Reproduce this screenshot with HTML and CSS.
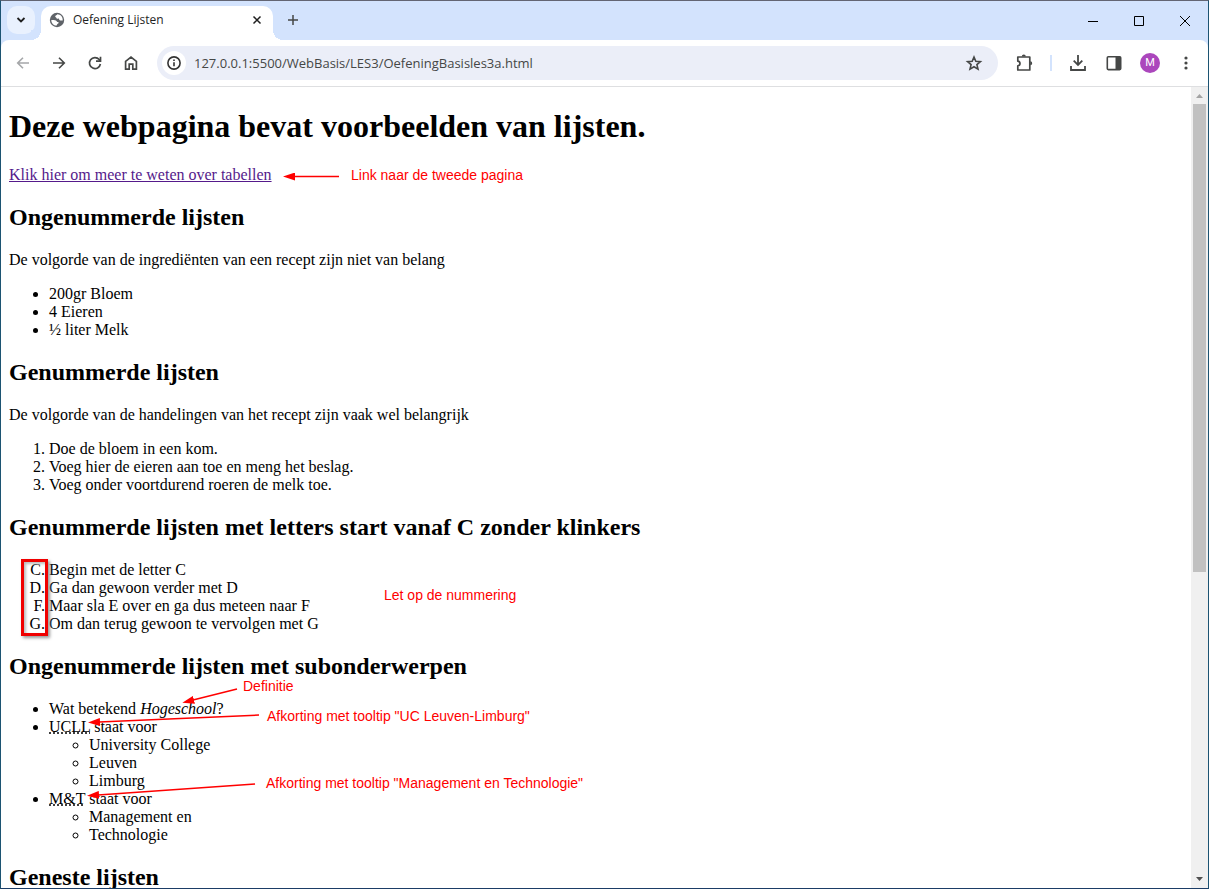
FILE: index.html
```html
<!DOCTYPE html>
<html lang="nl">
<head>
<meta charset="utf-8">
<title>Oefening Lijsten</title>
<link rel="stylesheet" href="styles.css">
</head>
<body>
<div class="window">
  <header class="tabstrip">
    <button class="tab-search" aria-label="Tabbladen zoeken">
      <svg width="12" height="12" viewBox="0 0 12 12" fill="none" stroke="#1f1f1f" stroke-width="1.800"><path d="M2.500 4 6 7.500 9.500 4"/></svg>
    </button>
    <div class="tab">
      <svg class="favicon" width="16" height="16" viewBox="0 0 16 16"><circle cx="8" cy="8" r="7.200" fill="#5f6368"/><path d="M2.300 8c1.800.2 3.200-.1 4.600.5 1.100.5.800 1.500 2 1.600 1 .1 1 .9.300 1.400-.7.500-1.300.6-1.500 2.100C4.800 13.700 2.300 11.200 2.300 8zM8.300 2.200C7.800 3.400 6.400 3.200 6.200 4.300c-.2 1 1.100.9 1.200 1.800.1.800.9.900 1.500.6.800-.4 1.300.1 1.300.9.100 1.300 2.300 1.100 3.500.8C14 5 11.600 2.300 8.300 2.200z" fill="#fff"/></svg>
      <span class="tab-title">Oefening Lijsten</span>
      <button class="tab-close" aria-label="Tabblad sluiten">
        <svg width="16" height="16" viewBox="0 0 16 16" stroke="#1f1f1f" stroke-width="1.500"><path d="m4.500 4.500 7 7m0-7-7 7"/></svg>
      </button>
    </div>
    <button class="new-tab" aria-label="Nieuw tabblad">
      <svg width="12" height="12" viewBox="0 0 12 12" stroke="#454746" stroke-width="1.500"><path d="M6 1v10M1 6h10"/></svg>
    </button>
    <div class="caption">
      <button aria-label="Minimaliseren"><svg width="10" height="10" viewBox="0 0 10 10"><path d="M0 5h10v1H0z"/></svg></button>
      <button aria-label="Maximaliseren"><svg width="10" height="10" viewBox="0 0 10 10" fill="none" stroke="#000"><path d="M.5.5h9v9h-9z"/></svg></button>
      <button aria-label="Sluiten"><svg width="10" height="10" viewBox="0 0 10 10" stroke="#000"><path d="m0 0 10 10M10 0 0 10"/></svg></button>
    </div>
  </header>

  <div class="toolbar-wrap">
    <nav class="toolbar">
      <div class="tools">
        <button aria-label="Terug"><svg width="16" height="16" viewBox="0 0 16 16" fill="none" stroke="#a5a7a9" stroke-width="1.600"><path d="M14 8H3M8 2.700 2.700 8 8 13.300"/></svg></button>
        <button aria-label="Vooruit"><svg width="16" height="16" viewBox="0 0 16 16" fill="none" stroke="#454746" stroke-width="1.600"><path d="M2 8h11M8 2.700 13.300 8 8 13.300"/></svg></button>
        <button aria-label="Opnieuw laden"><svg width="16" height="16" viewBox="0 0 16 16" fill="none" stroke="#454746" stroke-width="1.700"><path d="M13.400 9A5.500 5.500 0 1 1 12.200 4.500L13.500 6"/><path d="M13.500 1.800V6.200H9"/></svg></button>
        <button aria-label="Startpagina"><svg width="16" height="16" viewBox="0 0 16 16" fill="none" stroke="#454746" stroke-width="1.700"><path d="M2.600 14.200V6.300L8 2l5.400 4.300v7.900H9.800V9.200H6.200v5z"/></svg></button>
      </div>
      <div class="omnibox">
        <button class="site-info" aria-label="Sitegegevens"><svg width="16" height="16" viewBox="0 0 16 16" fill="none" stroke="#333"><circle cx="8" cy="8" r="6.100" stroke-width="1.600"/><path d="M8 7.200v4M8 4.500v1.600" stroke-width="1.600"/></svg></button>
        <input class="url" type="text" aria-label="Adresbalk" value="127.0.0.1:5500/WebBasis/LES3/OefeningBasisles3a.html">
        <button class="star" aria-label="Bladwijzer toevoegen"><svg width="18" height="18" viewBox="0 0 18 18" fill="none" stroke="#454746" stroke-width="1.600"><path d="m9 3 1.800 4.200 4.600.4-3.500 3 1.100 4.500L9 12.700l-4 2.400 1.100-4.500-3.500-3 4.600-.4z"/></svg></button>
      </div>
      <div class="tools">
        <button aria-label="Extensies"><svg width="18" height="18" viewBox="0 0 18 18"><path d="M2.800 3h12v13h-12v-4.200c2.900-.3 2.900-4.300 0-4.600z" fill="none" stroke="#454746" stroke-width="1.700" stroke-linejoin="round"/><path d="M6.800 2.600a2 2 0 0 1 4 0zM15.200 7.200a2 2 0 0 1 0 4z" fill="#454746"/></svg></button>
        <span class="separator"></span>
        <button aria-label="Downloads"><svg width="18" height="18" viewBox="0 0 18 18" fill="none" stroke="#454746" stroke-width="1.800"><path d="M9 1v9.500M4.700 6.700 9 11l4.300-4.300M2 12v4h14v-4"/></svg></button>
        <button aria-label="Zijvenster"><svg width="16" height="16" viewBox="0 0 16 16"><rect x="1.300" y="1.800" width="13.400" height="12.800" rx="1" fill="none" stroke="#454746" stroke-width="1.600"/><path d="M9.500 1.800h5v12.800h-5z" fill="#454746"/></svg></button>
        <button aria-label="Profiel M"><span class="avatar">M</span></button>
        <button aria-label="Menu"><svg width="16" height="16" viewBox="0 0 16 16" fill="#454746"><circle cx="8" cy="3" r="1.600"/><circle cx="8" cy="8" r="1.600"/><circle cx="8" cy="13" r="1.600"/></svg></button>
      </div>
    </nav>
  </div>

  <div class="viewport">
    <main class="page">
      <h1>Deze webpagina bevat voorbeelden van lijsten.</h1>
      <p><a href="#tabellen">Klik hier om meer te weten over tabellen</a></p>
      <h2>Ongenummerde lijsten</h2>
      <p>De volgorde van de ingrediënten van een recept zijn niet van belang</p>
      <ul>
        <li>200gr Bloem</li>
        <li>4 Eieren</li>
        <li>½ liter Melk</li>
      </ul>
      <h2>Genummerde lijsten</h2>
      <p>De volgorde van de handelingen van het recept zijn vaak wel belangrijk</p>
      <ol>
        <li>Doe de bloem in een kom.</li>
        <li>Voeg hier de eieren aan toe en meng het beslag.</li>
        <li>Voeg onder voortdurend roeren de melk toe.</li>
      </ol>
      <h2>Genummerde lijsten met letters start vanaf C zonder klinkers</h2>
      <ol type="A" start="3">
        <li>Begin met de letter C</li>
        <li>Ga dan gewoon verder met D</li>
        <li value="6">Maar sla E over en ga dus meteen naar F</li>
        <li>Om dan terug gewoon te vervolgen met G</li>
      </ol>
      <h2>Ongenummerde lijsten met subonderwerpen</h2>
      <ul>
        <li>Wat betekend <dfn>Hogeschool</dfn>?</li>
        <li><abbr title="UC Leuven-Limburg">UCLL</abbr> staat voor
          <ul>
            <li>University College</li>
            <li>Leuven</li>
            <li>Limburg</li>
          </ul>
        </li>
        <li><abbr title="Management en Technologie">M&amp;T</abbr> staat voor
          <ul>
            <li>Management en</li>
            <li>Technologie</li>
          </ul>
        </li>
      </ul>
      <h2>Geneste lijsten</h2>

      <svg class="arrows" width="600" height="800" viewBox="0 0 600 800" stroke="#f00" stroke-width="1.500" fill="#f00">
        <defs>
          <marker id="head" markerUnits="userSpaceOnUse" markerWidth="12" markerHeight="8" refX="1" refY="4" orient="auto-start-reverse" viewBox="0 0 12 8"><path d="M0 0 12 4 0 8z" stroke="none"/></marker>
        </defs>
        <path marker-start="url(#head)" d="M294 89.500h45"/>
        <path marker-start="url(#head)" d="m193 613 44-11"/>
        <path marker-start="url(#head)" d="m99 635 160-7"/>
        <path marker-start="url(#head)" d="m98 708 157-11"/>
      </svg>
      <span class="frame"></span>
      <span class="note note-link">Link naar de tweede pagina</span>
      <span class="note note-numbers">Let op de nummering</span>
      <span class="note note-definition">Definitie</span>
      <span class="note note-ucll">Afkorting met tooltip "UC Leuven-Limburg"</span>
      <span class="note note-mt">Afkorting met tooltip "Management en Technologie"</span>
    </main>
    <div class="scrollbar">
      <svg class="arrow" width="17" height="17" viewBox="0 0 17 17" fill="#a3a3a3"><path d="M5 11h7L8.500 7z"/></svg>
      <div class="track"><div class="thumb"></div></div>
      <svg class="arrow" width="17" height="17" viewBox="0 0 17 17" fill="#505050"><path d="M5 6h7L8.500 10z"/></svg>
    </div>
  </div>
</div>
</body>
</html>
```
FILE: styles.css
```css
* { box-sizing: border-box; }

body {
  margin: 0;
  overflow: hidden;
}

button {
  display: flex;
  align-items: center;
  justify-content: center;
  padding: 0;
  border: 0;
  background: none;
}

.window {
  display: flex;
  flex-direction: column;
  height: 100vh;
  border: 1px solid #1c5372;
  border-top-color: #636573;
  border-bottom-color: #1b3c66;
  background: #fff;
  font-family: "Open Sans", "Noto Sans", sans-serif;
}

/* Tab strip */
.tabstrip {
  display: flex;
  flex: none;
  height: 39px;
  padding-left: 6px;
  background: #d3e3fd;
}

.tab-search {
  width: 28px;
  height: 28px;
  margin-top: 5px;
  border-radius: 10px;
  background: #e9f1fe;
}

.tab {
  position: relative;
  display: flex;
  align-items: center;
  width: 232px;
  margin: 5px 0 0 6px;
  padding: 0 8px 6px;
  border-radius: 10px 10px 0 0;
  background: #fff;
}

.tab::before,
.tab::after {
  content: "";
  position: absolute;
  bottom: 0;
  width: 10px;
  height: 10px;
}

.tab::before {
  right: 100%;
  background: radial-gradient(circle at 0 0, #d3e3fd 10px, #fff 10px);
}

.tab::after {
  left: 100%;
  background: radial-gradient(circle at 100% 0, #d3e3fd 10px, #fff 10px);
}

.tab-title {
  flex: 1;
  margin-left: 8px;
  color: #1f1f1f;
  font-size: 12px;
  line-height: 16px;
}

.new-tab {
  width: 28px;
  height: 28px;
  margin: 5px 0 0 6px;
}

.caption {
  display: flex;
  margin-left: auto;
}

.caption button { width: 46px; }

/* Toolbar */
.toolbar-wrap {
  flex: none;
  background: #d3e3fd;
}

.toolbar {
  display: flex;
  align-items: center;
  gap: 8px;
  height: 47px;
  padding: 0 4px;
  border-bottom: 1px solid #dedfe1;
  border-radius: 8px 8px 0 0;
  background: #fff;
}

.tools {
  display: flex;
  align-items: center;
}

.tools button {
  width: 36px;
  height: 36px;
}

.omnibox {
  display: flex;
  flex: 1;
  align-items: center;
  height: 34px;
  padding: 0 12px 0 5px;
  border-radius: 17px;
  background: #ebeef8;
}

.site-info {
  width: 24px;
  height: 24px;
  border-radius: 50%;
  background: #fff;
}

.url {
  flex: 1;
  min-width: 0;
  margin-left: 8px;
  padding: 0;
  border: 0;
  background: none;
  color: #454746;
  font-family: inherit;
  font-size: 13px;
  outline: 0;
}

.star {
  width: 24px;
  height: 24px;
}

.separator {
  width: 2px;
  height: 16px;
  margin: 0 8px;
  background: #d3e3fd;
}

.avatar {
  width: 20px;
  border-radius: 50%;
  background: #ab47bc;
  color: #fff;
  font: 11px/20px Roboto, sans-serif;
  text-align: center;
}

/* Web page */
.viewport {
  display: flex;
  flex: 1;
  min-height: 0;
}

.page {
  position: relative;
  flex: 1;
  padding: 0 8px;
  overflow: hidden;
  font: 16px/18px "Liberation Serif", "Times New Roman", serif;
}

.page h1 {
  margin: 21px 0 22px;
  font-size: 32px;
  line-height: 36px;
}

.page h2 {
  margin: 20px 0;
  font-size: 24px;
  line-height: 27px;
}

.page a { color: #551a8b; }

.page abbr { text-decoration: underline dotted; }

/* Annotations lying over the page */
.arrows {
  position: absolute;
  top: 0;
  left: -1px;
}

.frame {
  position: absolute;
  top: 472px;
  left: 20px;
  width: 27px;
  height: 77px;
  border: 3px solid #f00000;
  box-shadow: 2px 2px 3px #999, inset 2px 2px 3px #bbb;
}

.note {
  position: absolute;
  color: #f00;
  font: 14px/16px "Liberation Sans", Arial, sans-serif;
  white-space: nowrap;
}

.note-link { top: 80px; left: 350px; }
.note-numbers { top: 500px; left: 383px; }
.note-definition { top: 591px; left: 242px; }
.note-ucll { top: 621px; left: 266px; }
.note-mt { top: 688px; left: 265px; }

/* Scrollbar */
.scrollbar {
  display: flex;
  flex: none;
  flex-direction: column;
  width: 17px;
  background: #f0f0f0;
}

.arrow { flex: none; }

.track {
  flex: 1;
  padding: 0 2px;
}

.thumb {
  height: 61%;
  background: #c1c1c1;
}
```
